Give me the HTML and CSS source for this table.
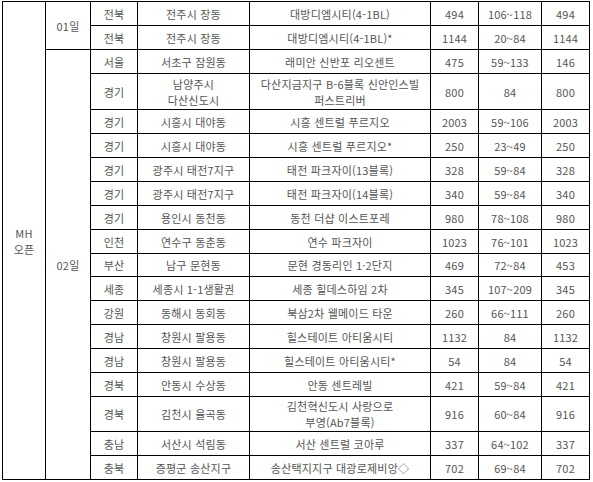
FILE: index.html
```html
<!DOCTYPE html>
<html lang="ko">
<head>
<meta charset="utf-8">
<link rel="stylesheet" href="styles.css">
</head>
<body>
<div class="sheet">
  <div class="c span-all">MH<br>오픈</div>
  <div class="c span-2">01일</div>
  <div class="c">전북</div><div class="c">전주시 장동</div><div class="c">대방디엠시티(4-1BL)</div><div class="c">494</div><div class="c">106~118</div><div class="c">494</div>
  <div class="c">전북</div><div class="c">전주시 장동</div><div class="c">대방디엠시티(4-1BL)*</div><div class="c">1144</div><div class="c">20~84</div><div class="c">1144</div>
  <div class="c span-17">02일</div>
  <div class="c">서울</div><div class="c">서초구 잠원동</div><div class="c">래미안 신반포 리오센트</div><div class="c">475</div><div class="c">59~133</div><div class="c">146</div>
  <div class="c">경기</div><div class="c">남양주시<br>다산신도시</div><div class="c">다산지금지구 B-6블록 신안인스빌<br>퍼스트리버</div><div class="c">800</div><div class="c">84</div><div class="c">800</div>
  <div class="c">경기</div><div class="c">시흥시 대야동</div><div class="c">시흥 센트럴 푸르지오</div><div class="c">2003</div><div class="c">59~106</div><div class="c">2003</div>
  <div class="c">경기</div><div class="c">시흥시 대야동</div><div class="c">시흥 센트럴 푸르지오*</div><div class="c">250</div><div class="c">23~49</div><div class="c">250</div>
  <div class="c">경기</div><div class="c">광주시 태전7지구</div><div class="c">태전 파크자이(13블록)</div><div class="c">328</div><div class="c">59~84</div><div class="c">328</div>
  <div class="c">경기</div><div class="c">광주시 태전7지구</div><div class="c">태전 파크자이(14블록)</div><div class="c">340</div><div class="c">59~84</div><div class="c">340</div>
  <div class="c">경기</div><div class="c">용인시 동천동</div><div class="c">동천 더샵 이스트포레</div><div class="c">980</div><div class="c">78~108</div><div class="c">980</div>
  <div class="c">인천</div><div class="c">연수구 동춘동</div><div class="c">연수 파크자이</div><div class="c">1023</div><div class="c">76~101</div><div class="c">1023</div>
  <div class="c">부산</div><div class="c">남구 문현동</div><div class="c">문현 경동리인 1·2단지</div><div class="c">469</div><div class="c">72~84</div><div class="c">453</div>
  <div class="c">세종</div><div class="c">세종시 1-1생활권</div><div class="c">세종 힐데스하임 2차</div><div class="c">345</div><div class="c">107~209</div><div class="c">345</div>
  <div class="c">강원</div><div class="c">동해시 동회동</div><div class="c">북삼2차 웰메이드 타운</div><div class="c">260</div><div class="c">66~111</div><div class="c">260</div>
  <div class="c">경남</div><div class="c">창원시 팔용동</div><div class="c">힐스테이트 아티움시티</div><div class="c">1132</div><div class="c">84</div><div class="c">1132</div>
  <div class="c">경남</div><div class="c">창원시 팔용동</div><div class="c">힐스테이트 아티움시티*</div><div class="c">54</div><div class="c">84</div><div class="c">54</div>
  <div class="c">경북</div><div class="c">안동시 수상동</div><div class="c">안동 센트레빌</div><div class="c">421</div><div class="c">59~84</div><div class="c">421</div>
  <div class="c">경북</div><div class="c">김천시 율곡동</div><div class="c">김천혁신도시 사랑으로<br>부영(Ab7블록)</div><div class="c">916</div><div class="c">60~84</div><div class="c">916</div>
  <div class="c">충남</div><div class="c">서산시 석림동</div><div class="c">서산 센트럴 코아루</div><div class="c">337</div><div class="c">64~102</div><div class="c">337</div>
  <div class="c">충북</div><div class="c">증평군 송산지구</div><div class="c">송산택지지구 대광로제비앙◇</div><div class="c">702</div><div class="c">69~84</div><div class="c">702</div>
</div>
</body>
</html>
```
FILE: styles.css
```css
html, body {
  margin: 0;
  padding: 0;
  background: #ffffff;
}

body {
  font-family: "Noto Sans CJK KR", "Noto Sans", sans-serif;
  font-size: 11px;
  color: #555555;
}

.sheet {
  display: grid;
  grid-template-columns: 42px 44px 46px 111px 180px 47px 62px 47px;
  grid-template-rows:
    23px 23px 23px 35px 23px 23px 23px 23px 23px 23px
    22px 23px 23px 23px 23px 23px 34px 23px 23px;
  gap: 1px;
  padding: 1px;
  background: #000000;
  width: max-content;
  margin: 1px 0 0 2px;
}

.c {
  background: #ffffff;
  display: flex;
  align-items: center;
  justify-content: center;
  text-align: center;
  line-height: 16px;
  letter-spacing: 0.2px;
  white-space: nowrap;
}

.span-all {
  grid-row: 1 / span 19;
}

.span-2 {
  grid-row: span 2;
}

.span-17 {
  grid-row: span 17;
}
```
